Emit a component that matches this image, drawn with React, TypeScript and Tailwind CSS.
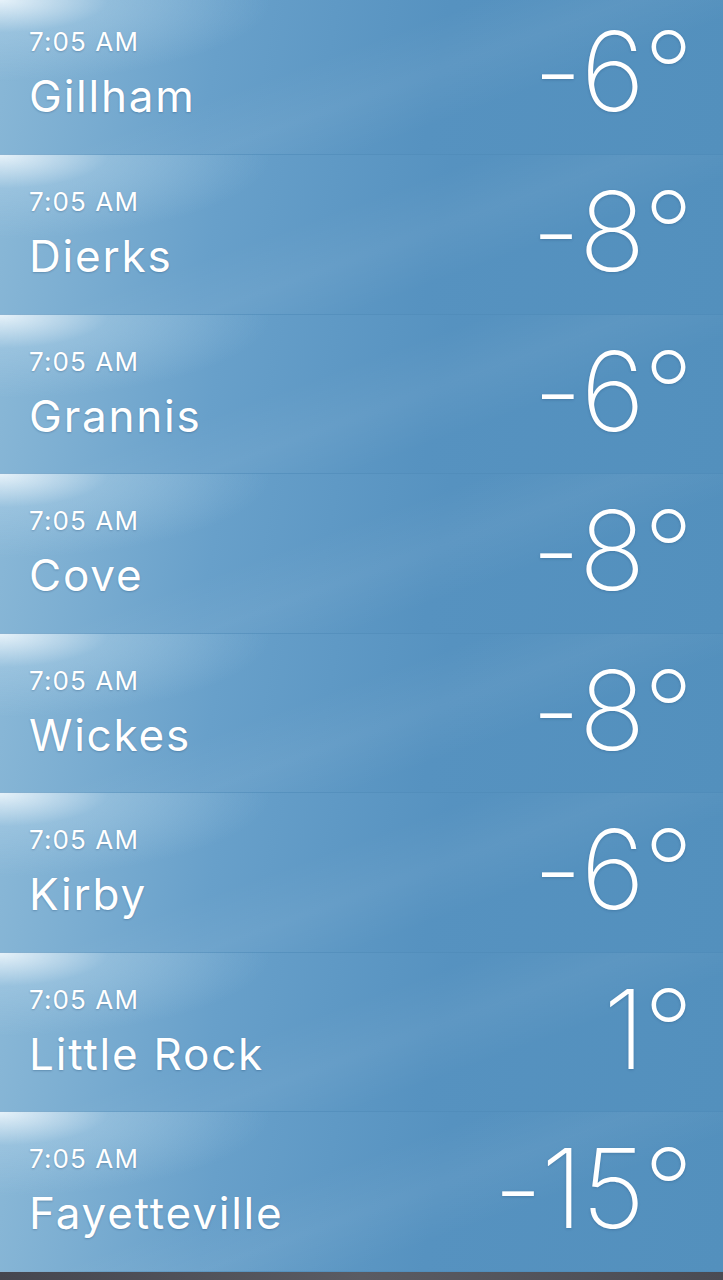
import React from "react";

type City = { time: string; name: string; temp: string };

const cities: City[] = [
  { time: "7:05 AM", name: "Gillham", temp: "-6°" },
  { time: "7:05 AM", name: "Dierks", temp: "-8°" },
  { time: "7:05 AM", name: "Grannis", temp: "-6°" },
  { time: "7:05 AM", name: "Cove", temp: "-8°" },
  { time: "7:05 AM", name: "Wickes", temp: "-8°" },
  { time: "7:05 AM", name: "Kirby", temp: "-6°" },
  { time: "7:05 AM", name: "Little Rock", temp: "1°" },
  { time: "7:05 AM", name: "Fayetteville", temp: "-15°" },
];

function CityRow({ city, first }: { city: City; first?: boolean }) {
  // the first row is scrolled up a little, so it is shorter
  return (
    <div
      className={
        (first ? "h-[155px] pt-[27px] " : "h-[159.5px] pt-[32px] ") +
        "relative flex items-start justify-between overflow-hidden border-b border-[#4f8bb8]/60 pl-[29px] pr-[31px] bg-[radial-gradient(ellipse_50%_70%_at_0%_0%,rgba(240,248,253,0.9)_0%,rgba(170,206,230,0.5)_30%,rgba(110,165,205,0)_75%),linear-gradient(100deg,#8ab8d7_0%,#68a0ca_30%,#5692c0_60%,#5390bd_100%)]"
      }
    >
      <div className="pointer-events-none absolute inset-0 bg-[linear-gradient(160deg,transparent_42%,rgba(255,255,255,0.05)_55%,transparent_68%)]" />
      <div className="relative flex flex-col text-white [text-shadow:0_1px_2px_rgba(0,40,80,0.25)]">
        <span className="font-['Inter',sans-serif] text-[26px] leading-[30px] tracking-[1.1px]">
          {city.time}
        </span>
        <span className="mt-[14px] font-['Inter',sans-serif] text-[44px] leading-[50px] tracking-[1.8px]">
          {city.name}
        </span>
      </div>
      <div className="relative -mt-[12px] font-['Inter',sans-serif] text-[110px] font-extralight leading-[112px] tracking-[-1.5px] text-white [text-shadow:0_1px_3px_rgba(0,40,80,0.2)]">
        {city.temp}
      </div>
    </div>
  );
}

export default function App() {
  return (
    <div className="flex h-[1280px] w-[723px] flex-col overflow-hidden bg-[#5390bd]">
      {cities.map((c, i) => (
        <CityRow key={i} city={c} first={i === 0} />
      ))}
      <div className="flex-1 bg-[linear-gradient(90deg,#45464f,#5a5b62_50%,#4a4b53)]" />
    </div>
  );
}
